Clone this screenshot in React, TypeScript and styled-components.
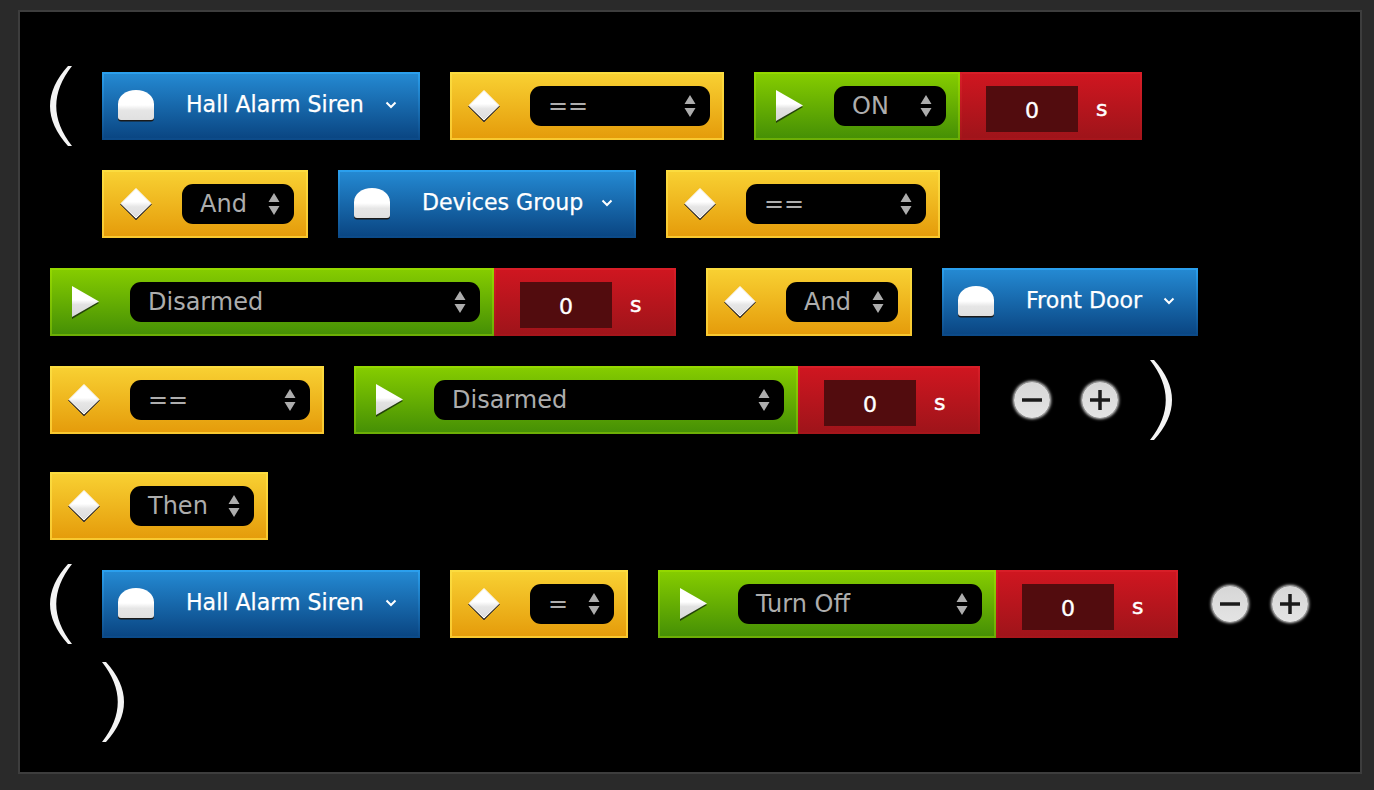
import React from "react";
import styled, { createGlobalStyle, css } from "styled-components";

const GlobalStyle = createGlobalStyle`
  html, body {
    margin: 0;
    padding: 0;
    background: #2a2a2a;
  }
  * {
    box-sizing: border-box;
  }
`;

const Panel = styled.div`
  width: 1344px;
  height: 764px;
  margin: 10px 0 0 18px;
  padding: 60px 30px 0;
  border: 2px solid #3d3d3d;
  background: #000;
  display: flex;
  flex-direction: column;
  gap: 30px;
  font-family: "DejaVu Sans", sans-serif;
  font-size: 24px;
`;

const Row = styled.div<{ $indent?: boolean; $spaced?: boolean }>`
  display: flex;
  align-items: center;
  gap: 30px;
  height: 68px;
  ${(p) => p.$indent && css`padding-left: 52px;`}
  ${(p) => p.$spaced && css`margin-top: 8px;`}
`;

const Pair = styled.div`
  display: flex;
`;

const Chip = styled.div`
  display: flex;
  align-items: center;
  height: 68px;
  border-width: 2px;
  border-style: solid;
`;

const DeviceChip = styled(Chip)<{ $w: number }>`
  width: ${(p) => p.$w}px;
  padding-right: 20px;
  border-image: linear-gradient(#2ba0ee, #0c4a88) 1;
  background: linear-gradient(#2489d2, #0a4683);
  color: #fff;
`;

const OperatorChip = styled(Chip)`
  padding-right: 12px;
  border-image: linear-gradient(#fbdc40, #f8c830) 1;
  background: linear-gradient(#f8d032, #e59c0b);
`;

const ValueChip = styled(Chip)`
  padding-right: 12px;
  border-image: linear-gradient(#94d800, #6cae06) 1;
  background: linear-gradient(#85cc00, #469005);
`;

const DelayChip = styled(Chip)`
  width: 182px;
  align-items: flex-start;
  padding-top: 12px;
  padding-left: 24px;
  border-image: linear-gradient(#d81e28, #a5151b) 1;
  background: linear-gradient(#cf1620, #9f141a);
  color: #fff;
`;

const IconSlot = styled.div<{ $w: number }>`
  display: flex;
  flex: none;
  align-items: center;
  width: 78px;
  padding-left: ${(p) => p.$w}px;
`;

const DeviceName = styled.span`
  margin-left: 4px;
  margin-top: -4px;
  font-size: 22.1px;
  white-space: nowrap;
  -webkit-text-stroke: 0.25px #fff;
`;

const Chevron = styled.svg`
  flex: none;
  width: 14px;
  height: 10px;
  margin-left: auto;
  margin-top: -2px;
`;

const Select = styled.div<{ $w: number }>`
  display: flex;
  align-items: center;
  justify-content: space-between;
  width: ${(p) => p.$w}px;
  height: 40px;
  padding: 0 14px 0 18px;
  border-radius: 11px;
  background: #000;
  color: #adadad;
  white-space: nowrap;
`;

const SelectText = styled.span`
  margin-top: 0;
`;

const Arrows = styled.svg`
  flex: none;
  width: 12px;
  height: 22px;
`;

const DelayInput = styled.div`
  width: 92px;
  height: 46px;
  background: #520c0e;
  display: flex;
  align-items: center;
  justify-content: center;
  padding-top: 2px;
  font-size: 22px;
  -webkit-text-stroke: 0.4px #fff;
`;

const Unit = styled.span`
  margin: 10px 0 0 18px;
  font-size: 22px;
  -webkit-text-stroke: 0.5px #fff;
`;

const Round = styled.div<{ $gap: number }>`
  display: flex;
  flex: none;
  align-items: center;
  justify-content: center;
  width: 36px;
  height: 36px;
  margin: 0 2px 0 ${(p) => p.$gap + 2}px;
  border-radius: 50%;
  background: linear-gradient(#d6d6d6, #e4e4e4);
  box-shadow: 0 0 3px 1px #e4e4e4;
`;

const ParenSvg = styled.svg<{ $flip?: boolean }>`
  flex: none;
  width: 22px;
  height: 80px;
  margin: -6px 0;
  ${(p) => p.$flip && css`transform: scaleX(-1);`}
`;

const Dome = () => (
  <svg width="38" height="34" viewBox="0 0 38 34">
    <defs>
      <linearGradient id="dome" x1="0" y1="0" x2="0" y2="1">
        <stop offset="0" stopColor="#fff" />
        <stop offset="0.5" stopColor="#fff" />
        <stop offset="0.68" stopColor="#e6e6e6" />
        <stop offset="1" stopColor="#e0e0e0" />
      </linearGradient>
    </defs>
    <path d="M1 28V15C1 7 9 1 19 1s18 6 18 14v13q0 3-3 3H4q-3 0-3-3z" fill="#1a1a1a" transform="translate(0 1.5)" />
    <path d="M1 28V15C1 7 9 1 19 1s18 6 18 14v13q0 3-3 3H4q-3 0-3-3z" fill="url(#dome)" />
  </svg>
);

const Diamond = () => (
  <svg width="36" height="36" viewBox="0 0 36 36">
    <defs>
      <linearGradient id="diamond" x1="0" y1="0" x2="0" y2="1">
        <stop offset="0" stopColor="#fff" />
        <stop offset="0.45" stopColor="#fff" />
        <stop offset="0.62" stopColor="#e6e6e6" />
        <stop offset="1" stopColor="#dcdcdc" />
      </linearGradient>
    </defs>
    <path d="M18 3.500 33.500 18.500 18 34 2.500 18.500z" fill="#4a4030" stroke="#4a4030" strokeLinejoin="round" />
    <path d="M18 2.500 33 17.500 18 32 3 17.500z" fill="url(#diamond)" stroke="#fff" strokeWidth="1" strokeLinejoin="round" />
  </svg>
);

const Play = () => (
  <svg width="30" height="34" viewBox="0 0 30 34">
    <defs>
      <linearGradient id="play" x1="0" y1="0" x2="0" y2="1">
        <stop offset="0" stopColor="#fff" />
        <stop offset="0.45" stopColor="#fff" />
        <stop offset="0.6" stopColor="#e2e2e2" />
        <stop offset="1" stopColor="#d8d8d8" />
      </linearGradient>
    </defs>
    <path d="M1 3 28 18 1 34z" fill="#24420a" />
    <path d="M1 1 28 16.500 1 32z" fill="url(#play)" />
  </svg>
);

const Paren = ({ flip }: { flip?: boolean }) => (
  <ParenSvg $flip={flip} viewBox="0 0 22 80">
    <path d="M18 0Q-18 40 18 80H22Q-9.500 40 22 0Z" fill="#f4f4f4" />
  </ParenSvg>
);

const Device = ({ name, w }: { name: string; w: number }) => (
  <DeviceChip $w={w}>
    <IconSlot $w={13}>
      <Dome />
    </IconSlot>
    <DeviceName>{name}</DeviceName>
    <Chevron viewBox="0 0 14 10">
      <path d="M2.500 2.500 7 7l4.500-4.500" fill="none" stroke="#fff" strokeWidth="2" />
    </Chevron>
  </DeviceChip>
);

const Dropdown = ({ label, w }: { label: string; w: number }) => (
  <Select $w={w}>
    <SelectText>{label}</SelectText>
    <Arrows viewBox="0 0 12 22">
      <path d="M6 0 11.500 9H.500z M6 22 .500 13H11.500z" fill="#adadad" />
    </Arrows>
  </Select>
);

const Operator = ({ label, w }: { label: string; w: number }) => (
  <OperatorChip>
    <IconSlot $w={14}>
      <Diamond />
    </IconSlot>
    <Dropdown label={label} w={w} />
  </OperatorChip>
);

const Value = ({ label, w }: { label: string; w: number }) => (
  <Pair>
    <ValueChip>
      <IconSlot $w={19}>
        <Play />
      </IconSlot>
      <Dropdown label={label} w={w} />
    </ValueChip>
    <DelayChip>
      <DelayInput>0</DelayInput>
      <Unit>s</Unit>
    </DelayChip>
  </Pair>
);

const Minus = ({ gap }: { gap: number }) => (
  <Round $gap={gap}>
    <svg width="24" height="24" viewBox="0 0 24 24">
      <path d="M2 12H22" stroke="#1a1a1a" strokeWidth="3.500" />
    </svg>
  </Round>
);

const Plus = ({ gap }: { gap: number }) => (
  <Round $gap={gap}>
    <svg width="24" height="24" viewBox="0 0 24 24">
      <path d="M2 12H22M12 2V22" stroke="#1a1a1a" strokeWidth="3.500" />
    </svg>
  </Round>
);

export default function App() {
  return (
    <>
      <GlobalStyle />
      <Panel>
        <Row>
          <Paren />
          <Device name="Hall Alarm Siren" w={318} />
          <Operator label="==" w={180} />
          <Value label="ON" w={112} />
        </Row>
        <Row $indent>
          <Operator label="And" w={112} />
          <Device name="Devices Group" w={298} />
          <Operator label="==" w={180} />
        </Row>
        <Row>
          <Value label="Disarmed" w={350} />
          <Operator label="And" w={112} />
          <Device name="Front Door" w={256} />
        </Row>
        <Row>
          <Operator label="==" w={180} />
          <Value label="Disarmed" w={350} />
          <Minus gap={2} />
          <Plus gap={-2} />
          <Paren flip />
        </Row>
        <Row $spaced>
          <Operator label="Then" w={124} />
        </Row>
        <Row>
          <Paren />
          <Device name="Hall Alarm Siren" w={318} />
          <Operator label="=" w={84} />
          <Value label="Turn Off" w={244} />
          <Minus gap={2} />
          <Plus gap={-10} />
        </Row>
        <Row $indent>
          <Paren flip />
        </Row>
      </Panel>
    </>
  );
}
